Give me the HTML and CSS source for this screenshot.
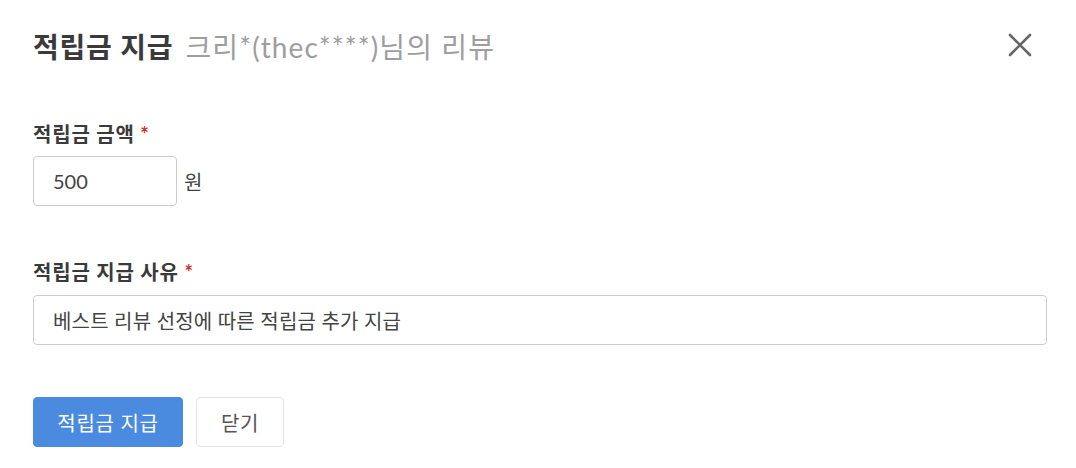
FILE: index.html
```html
<!DOCTYPE html>
<html lang="ko">
<head>
<meta charset="utf-8">
<link rel="stylesheet" href="styles.css">
</head>
<body>
<div class="modal">
  <header class="modal-head">
    <h1 class="title">적립금 지급<span class="sub">크리*(thec****)님의 리뷰</span></h1>
    <button class="close" aria-label="닫기">
      <svg width="24" height="24" viewBox="0 0 24 24"><path d="M2 2 L22 22 M22 2 L2 22" stroke="#666" stroke-width="2.6" stroke-linecap="round" fill="none"/></svg>
    </button>
  </header>
  <div class="field field-amount">
    <label class="label">적립금 금액 <span class="req">*</span></label>
    <div class="row">
      <div class="input input-short">500</div>
      <span class="unit">원</span>
    </div>
  </div>
  <div class="field field-reason">
    <label class="label">적립금 지급 사유 <span class="req">*</span></label>
    <div class="input input-wide">베스트 리뷰 선정에 따른 적립금 추가 지급</div>
  </div>
  <div class="actions">
    <button class="btn btn-primary">적립금 지급</button>
    <button class="btn btn-default">닫기</button>
  </div>
</div>
</body>
</html>
```
FILE: styles.css
```css
* { box-sizing: border-box; }
html, body { margin: 0; padding: 0; background: #fff; }
body {
  font-family: "Lato", "Noto Sans CJK KR", sans-serif;
  color: #333;
}
.modal {
  width: 1076px;
  padding: 20px 29px 0 33px;
}
.modal-head {
  display: flex;
  align-items: center;
  justify-content: space-between;
  height: 52px;
}
.title {
  margin: 0;
  font-size: 28px;
  font-weight: 700;
  color: #3a3a3a;
  letter-spacing: 0.8px;
  display: flex;
  align-items: baseline;
}
.sub {
  font-size: 28px;
  font-weight: 400;
  color: #9e9e9e;
  margin-left: 12px;
  letter-spacing: 1.1px;
}
.close {
  border: 0;
  background: none;
  padding: 0;
  width: 24px;
  height: 24px;
  margin-right: 15px;
  margin-top: -3px;
  display: flex;
}
.field-amount { margin-top: 50px; }
.field-reason { margin-top: 54px; }
.label {
  display: block;
  font-size: 20px;
  font-weight: 700;
  color: #3a3a3a;
  line-height: 24px;
  letter-spacing: 0.8px;
}
.req { color: #c8322d; }
.row {
  display: flex;
  align-items: center;
  gap: 7px;
  margin-top: 10px;
}
.input {
  height: 50px;
  border: 1px solid #ccc;
  border-radius: 4px;
  padding: 0 19px;
  display: flex;
  align-items: center;
  font-size: 20px;
  color: #444;
}
.input-short { width: 144px; }
.input-wide { width: 1014px; margin-top: 11px; letter-spacing: 0.2px; }
.unit { font-size: 20px; color: #444; }
.actions {
  display: flex;
  gap: 13px;
  margin-top: 52px;
}
.btn {
  height: 50px;
  border-radius: 4px;
  font-family: inherit;
  font-size: 20px;
  padding: 0;
  letter-spacing: 0.7px;
}
.btn-primary {
  width: 150px;
  background: #4a8be0;
  border: 1px solid #4a8be0;
  color: #fff;
}
.btn-default {
  width: 88px;
  background: #fff;
  border: 1px solid #e3e3e3;
  color: #555;
}
```
